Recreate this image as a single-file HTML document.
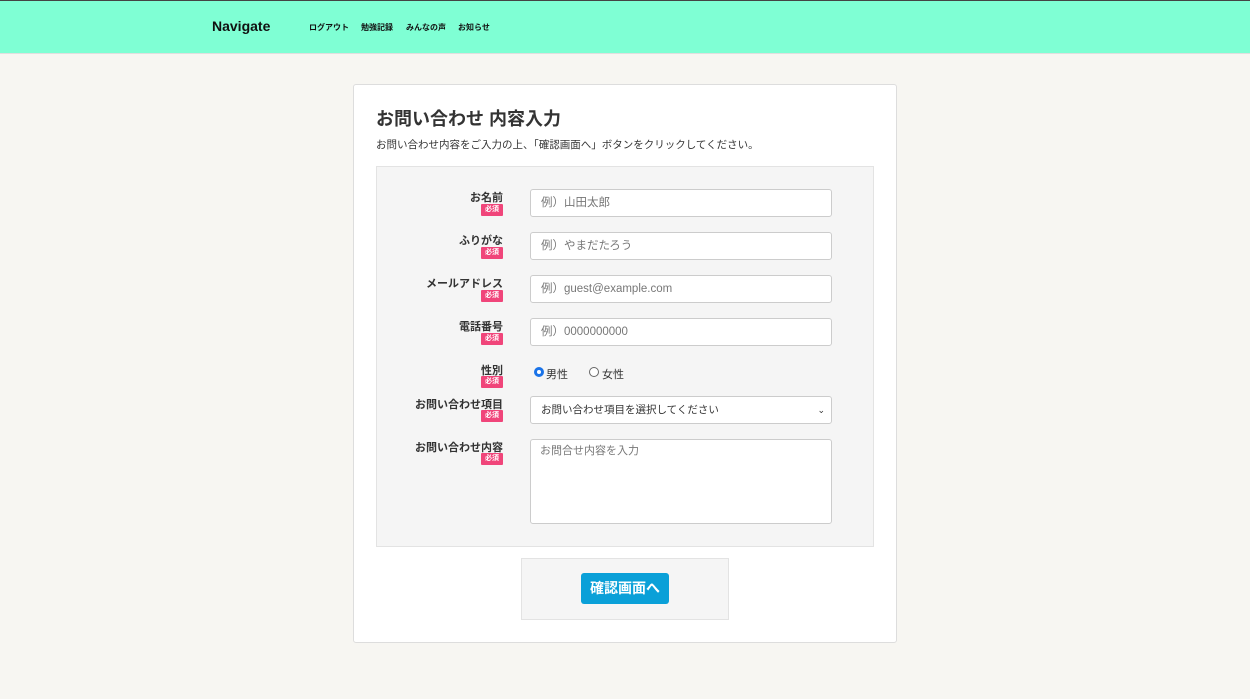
<html><head><style>
*{margin:0;padding:0;box-sizing:border-box}
body{width:1250px;height:699px;background:#f7f6f2;font-family:"Liberation Sans","Noto Sans CJK JP",sans-serif;position:relative;overflow:hidden;color:#333}
.hd{position:absolute;left:0;top:0;width:1250px;height:54px;background:#7fffd4;border-top:1px solid #444;border-bottom:1px solid #e0e0e0}
.logo{position:absolute;left:212px;top:17px;font-size:14px;font-weight:bold;color:#111}
.nav{position:absolute;top:21px;font-size:8px;font-weight:bold;color:#111}
.card{position:absolute;left:353px;top:84px;width:544px;height:559px;background:#fff;border:1px solid #ddd;border-radius:3px}
.ab{position:absolute}
.lbl{position:absolute;right:747px;font-size:11px;font-weight:bold;text-align:right;color:#333}
.req{position:absolute;left:481px;width:22px;height:12px;background:#f0457a;color:#fff;font-size:7px;font-weight:bold;text-align:center;line-height:12px;border-radius:1px}
.in{position:absolute;left:530px;width:302px;height:28px;background:#fff;border:1px solid #ccc;border-radius:3px;font-size:11.5px;color:#777;padding-left:10px;line-height:26px}
</style></head><body>
<div class="hd"><div class="logo">Navigate</div>
<div class="nav" style="left:309px">ログアウト</div><div class="nav" style="left:361px">勉強記録</div><div class="nav" style="left:406px">みんなの声</div><div class="nav" style="left:458px">お知らせ</div></div>
<div class="card"></div>
<div class="ab" style="left:376px;top:105px;font-size:18px;font-weight:bold;color:#333">お問い合わせ 内容入力</div>
<div class="ab" style="left:376px;top:137px;font-size:10.5px;color:#333">お問い合わせ内容をご入力の上、「確認画面へ」ボタンをクリックしてください。</div>
<div class="ab" style="left:376px;top:166px;width:498px;height:381px;background:#f5f5f5;border:1px solid #e3e3e3"></div>
<div class="lbl" style="top:189px">お名前</div><div class="req" style="top:204px">必須</div>
<div class="in" style="top:189px">例）山田太郎</div>
<div class="lbl" style="top:232px">ふりがな</div><div class="req" style="top:247px">必須</div>
<div class="in" style="top:232px">例）やまだたろう</div>
<div class="lbl" style="top:275px">メールアドレス</div><div class="req" style="top:290px">必須</div>
<div class="in" style="top:275px">例）guest@example.com</div>
<div class="lbl" style="top:318px">電話番号</div><div class="req" style="top:333px">必須</div>
<div class="in" style="top:318px">例）0000000000</div>
<div class="lbl" style="top:362px">性別</div><div class="req" style="top:376px">必須</div>
<div class="ab" style="left:534px;top:367px;width:10px;height:10px;border-radius:50%;border:3px solid #1a73e8;background:#fff"></div>
<div class="ab" style="left:546px;top:366px;font-size:11px">男性</div>
<div class="ab" style="left:589px;top:367px;width:10px;height:10px;border-radius:50%;border:1px solid #666;background:#fff"></div>
<div class="ab" style="left:602px;top:366px;font-size:11px">女性</div>
<div class="lbl" style="top:396px">お問い合わせ項目</div><div class="req" style="top:410px">必須</div>
<div class="in" style="top:396px;color:#333;font-size:10.5px">お問い合わせ項目を選択してください<span style="position:absolute;right:6px;top:0;font-size:9px">&#8964;</span></div>
<div class="lbl" style="top:439px">お問い合わせ内容</div><div class="req" style="top:453px">必須</div>
<div class="in" style="top:439px;height:85px;line-height:22px;padding-left:9px;font-size:11px">お問合せ内容を入力</div>
<div class="ab" style="left:521px;top:558px;width:208px;height:62px;background:#f5f5f5;border:1px solid #e3e3e3"></div>
<div class="ab" style="left:581px;top:573px;width:88px;height:31px;background:#0aa0d8;border-radius:3px;color:#fff;font-size:14px;font-weight:bold;text-align:center;line-height:31px">確認画面へ</div>
</body></html>
